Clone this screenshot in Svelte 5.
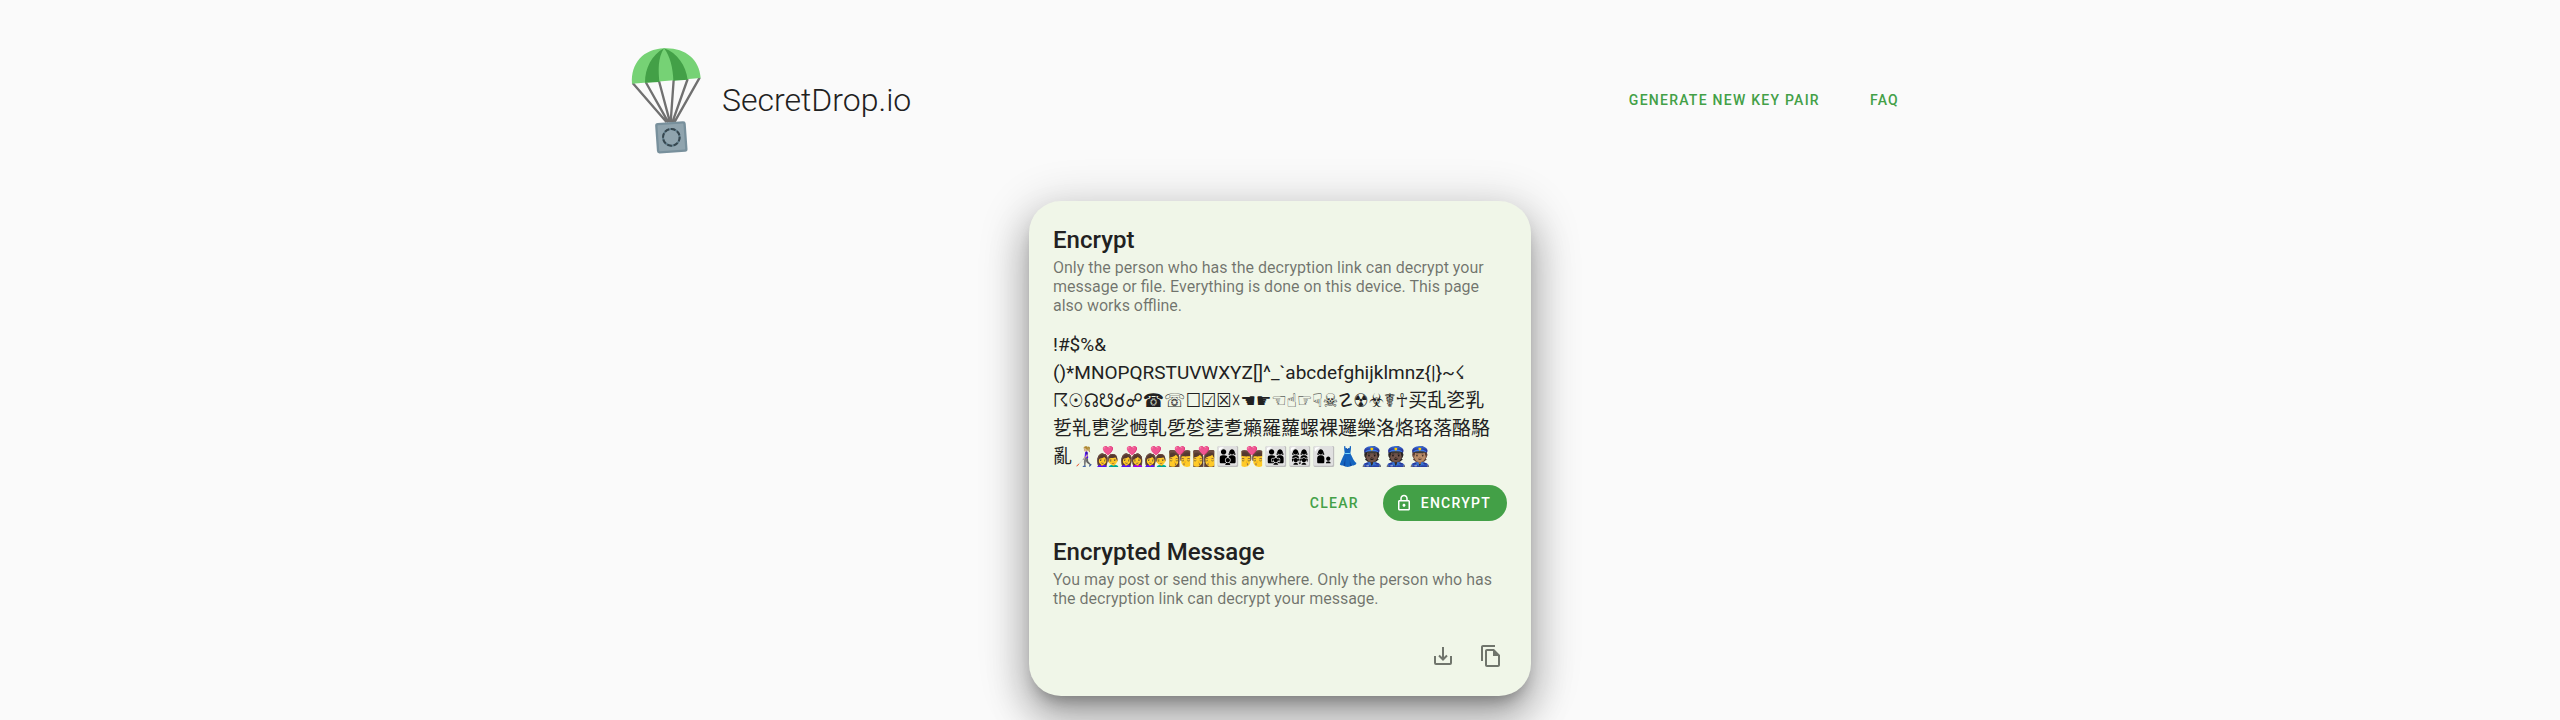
<script>
  let message = $state(
    [
      '!#$%&',
      '()*MNOPQRSTUVWXYZ[]^_`abcdefghijklmnz{|}~☇',
      '☈☉☊☋☌☍☎☏☐☑☒☓☚☛☜☝☞☟☠☡☢☣☤☥买乱乲乳',
      '乴乵乶乷乸乹乺乻乼乽癩羅蘿螺裸邏樂洛烙珞落酪駱',
      '亂👩🏼‍🦯👩‍❤️‍👨👩‍❤️‍👩👩‍❤️‍👨👩‍❤️‍💋‍👨👩‍❤️‍💋‍👩👨‍👩‍👦👨‍❤️‍💋‍👨👨‍👩‍👧👩‍👩‍👧‍👧👩‍👦👗👮🏿👮🏿👮🏽',
    ].join('\n')
  );
</script>

<header>
  <a class="brand" href="#home">
    <svg viewBox="0 0 255 360" width="85" height="120" aria-hidden="true">
      <path d="M23 129 125 247M62 126 130 247M102 123 135 247M146 120 137 247M188 117 142 247M224 113 148 247" fill="none" stroke="#707070" stroke-width="7" />
      <path d="M21 131C17 70 55 27 117 25C178 22 224 57 227 114Z" fill="#76d275" />
      <path d="M60 128C60 85 80 45 117 25C98 55 100 90 103 126ZM117 25C135 48 144 84 145 122L188 119C183 78 157 38 117 25Z" fill="#43a047" />
      <g transform="rotate(-4 139 292)">
        <rect x="93" y="246" width="92" height="92" rx="8" fill="#78909c" />
        <rect x="100" y="253" width="78" height="78" rx="2" fill="#90a4ae" />
        <circle cx="139" cy="292" r="25" fill="none" stroke="#607d8b" stroke-width="6" />
        <circle cx="139" cy="292" r="25" fill="none" stroke="#37474f" stroke-width="6" stroke-dasharray="14 5.6" />
      </g>
    </svg>
    <span>SecretDrop.io</span>
  </a>
  <nav>
    <a href="#generate">Generate new key pair</a>
    <a href="#faq">FAQ</a>
  </nav>
</header>

<main>
  <section class="card">
    <h2>Encrypt</h2>
    <p>Only the person who has the decryption link can decrypt your message or file. Everything is done on this device. This page also works offline.</p>
    <textarea rows="5" aria-label="Message" wrap="off" spellcheck="false" bind:value={message}></textarea>
    <div class="actions">
      <button class="text" onclick={() => (message = '')}>Clear</button>
      <button class="filled">
        <svg viewBox="0 0 24 24" width="18" height="18" fill="currentColor" aria-hidden="true">
          <path d="M18 8h-1V6c0-2.760-2.240-5-5-5S7 3.240 7 6v2H6c-1.100 0-2 .900-2 2v10c0 1.100.900 2 2 2h12c1.100 0 2-.900 2-2V10c0-1.100-.900-2-2-2zM9 6c0-1.660 1.340-3 3-3s3 1.340 3 3v2H9V6zm9 14H6V10h12v10zm-6-3c1.100 0 2-.900 2-2s-.900-2-2-2-2 .900-2 2 .900 2 2 2z" />
        </svg>
        Encrypt
      </button>
    </div>
    <h2>Encrypted Message</h2>
    <p>You may post or send this anywhere. Only the person who has the decryption link can decrypt your message.</p>
    <div class="icons">
      <button aria-label="Download">
        <svg viewBox="0 0 24 24" width="24" height="24" fill="none" stroke="currentColor" stroke-width="2" aria-hidden="true">
          <path d="M4 12v7q0 1 1 1h14q1 0 1-1v-7M12 3v12M8 11.500l4 4 4-4" />
        </svg>
      </button>
      <button aria-label="Copy">
        <svg viewBox="0 0 24 24" width="24" height="24" fill="currentColor" aria-hidden="true">
          <path d="M16 1H4c-1.100 0-2 .900-2 2v14h2V3h12V1zm-1 4H8c-1.100 0-1.990.900-1.990 2L6 21c0 1.100.890 2 1.990 2H19c1.100 0 2-.900 2-2V11l-6-6zM8 21V7h6v5h5v9H8z" />
        </svg>
      </button>
    </div>
  </section>
</main>

<style>
  :global(body) {
    margin: 0;
    background: #fafafa;
    color: #212121;
    font-family: Roboto, sans-serif;
  }
  header {
    box-sizing: border-box;
    display: flex;
    align-items: center;
    justify-content: space-between;
    max-width: 1310px;
    margin: 0 auto;
    padding: 40px 28px 40px 0;
  }
  .brand {
    display: flex;
    align-items: center;
    gap: 12px;
    color: #212121;
    font-size: 32px;
    font-weight: 300;
    text-decoration: none;
  }
  nav {
    display: flex;
    gap: 34px;
  }
  nav a,
  .actions button {
    padding: 0 8px;
    color: #43a047;
    font: 500 14px/36px Roboto, sans-serif;
    letter-spacing: 1.25px;
    text-decoration: none;
    text-transform: uppercase;
  }
  main {
    display: flex;
    justify-content: center;
    padding: 1px 16px 24px;
  }
  .card {
    box-sizing: border-box;
    width: 100%;
    max-width: 502px;
    padding: 25px 24px 16px;
    border-radius: 32px;
    background: #f0f6e8;
    box-shadow:
      0 11px 15px -7px rgba(0, 0, 0, 0.3),
      0 24px 38px 3px rgba(0, 0, 0, 0.22),
      0 9px 46px 8px rgba(0, 0, 0, 0.16);
  }
  h2 {
    margin: 0 0 4px;
    font-size: 24px;
    font-weight: 500;
    line-height: 28px;
  }
  p {
    margin: 0;
    color: rgba(0, 0, 0, 0.54);
    font-size: 16px;
    line-height: 19px;
  }
  textarea {
    display: block;
    box-sizing: border-box;
    width: 100%;
    margin: 16px 0 14px;
    padding: 0;
    border: 0;
    outline: 0;
    overflow: hidden;
    resize: none;
    background: none;
    color: #212121;
    font: 400 19px/28px 'Roboto Slab', Roboto, 'DejaVu Sans Condensed', 'Noto Sans CJK SC', sans-serif;
  }
  .actions {
    display: flex;
    justify-content: flex-end;
    gap: 16px;
    margin-bottom: 17px;
  }
  button {
    border: 0;
    background: none;
    cursor: pointer;
  }
  .actions .filled {
    display: flex;
    align-items: center;
    gap: 8px;
    padding: 0 16px 0 12px;
    border-radius: 18px;
    background: #43a047;
    color: #fff;
  }
  .icons {
    display: flex;
    justify-content: flex-end;
    margin: 24px -8px 0;
  }
  .icons button {
    padding: 12px;
    color: #70756c;
    line-height: 0;
  }
</style>
